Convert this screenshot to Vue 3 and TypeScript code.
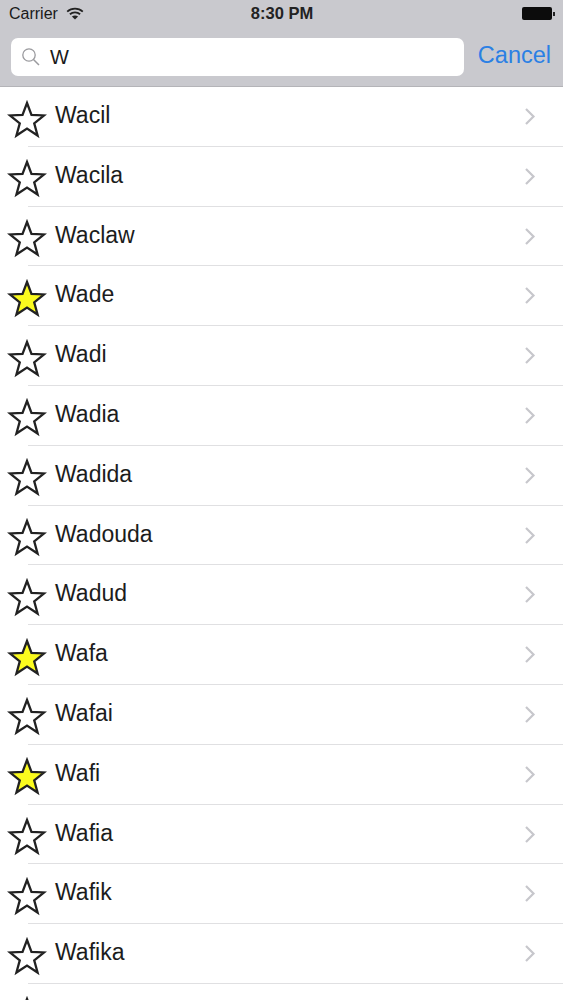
<script setup lang="ts">
interface Row { id: number; name: string; fav: boolean }
const rows: Row[] = [
  ['Wacil', false], ['Wacila', false], ['Waclaw', false], ['Wade', true], ['Wadi', false],
  ['Wadia', false], ['Wadida', false], ['Wadouda', false], ['Wadud', false], ['Wafa', true],
  ['Wafai', false], ['Wafi', true], ['Wafia', false], ['Wafik', false], ['Wafika', false], ['', false],
].map(([name, fav], id) => ({ id, name: name as string, fav: fav as boolean }))
</script>

<template>
  <div class="screen">
    <header class="top">
      <div class="status">
        <div class="status-left">
          <span>Carrier</span>
          <svg class="wifi" width="18" height="13" viewBox="0 0 18 13">
            <path d="M1.2 4.6C5.6.6 12.4.6 16.800 4.600" fill="none" stroke="#222" stroke-width="1.800" />
            <path d="M3.900 7.300C6.800 4.800 11.200 4.800 14.100 7.300" fill="none" stroke="#222" stroke-width="1.800" />
            <path d="M9 12.600 5.900 9.500C7.700 8 10.300 8 12.100 9.500Z" fill="#222" />
          </svg>
        </div>
        <div class="time">8:30 PM</div>
        <div class="status-right">
          <span class="battery"></span>
          <span class="nub"></span>
        </div>
      </div>
      <div class="searchbar">
        <div class="field">
          <svg class="glass" width="20" height="20" viewBox="0 0 20 20">
            <circle cx="8" cy="8" r="6.200" fill="none" stroke="#9a9a9e" stroke-width="1.300" />
            <path d="M12.500 12.500 18 18" stroke="#9a9a9e" stroke-width="1.500" fill="none" />
          </svg>
          <span class="query">W</span>
        </div>
        <span class="cancel">Cancel</span>
      </div>
    </header>
    <ul class="list">
      <li v-for="r in rows" :key="r.id" class="row">
        <svg class="star" width="40" height="42" viewBox="0 0 40 42">
          <polygon
            points="20,4 24.470,15.850 37.120,16.440 27.230,24.350 30.580,36.560 20,29.600 9.420,36.560 12.770,24.350 2.880,16.440 15.530,15.850"
            :fill="r.fav ? '#fbfb1e' : '#fff'"
            stroke="#222"
            stroke-width="2.300"
          />
        </svg>
        <span class="name">{{ r.name }}</span>
        <svg class="chev" width="12" height="19" viewBox="0 0 12 19">
          <path d="M2 2 9.500 9.500 2 17" fill="none" stroke="#c7c7cc" stroke-width="2.200" />
        </svg>
      </li>
    </ul>
  </div>
</template>

<style>
html, body { margin: 0; background: #fff; }
</style>

<style scoped>
.screen {
  width: 563px;
  height: 1000px;
  overflow: hidden;
  background: #fff;
  font-family: "Liberation Sans", Arial, sans-serif;
  color: #1a1a1a;
}
.top {
  height: 87px;
  box-sizing: border-box;
  background: #c9c9ce;
  border-bottom: 1px solid #b4b4b8;
}
.status {
  height: 30px;
  display: grid;
  grid-template-columns: 1fr auto 1fr;
  align-items: center;
  padding: 0 8px 3px 9px;
  box-sizing: border-box;
  font-size: 16px;
}
.status-left { display: flex; align-items: center; gap: 8px; }
.wifi { margin-top: -1px; }
.time { font-weight: 700; font-size: 16.500px; color: #222; }
.status-right { display: flex; justify-content: flex-end; align-items: center; }
.battery { width: 30px; height: 13px; border-radius: 2px; background: #0c0c0c; }
.nub { width: 2px; height: 4px; background: #222; margin-left: 1px; }
.searchbar {
  display: flex;
  align-items: center;
  padding: 8px 12px 0 11px;
  justify-content: space-between;
}
.field {
  width: 453px;
  height: 38px;
  box-sizing: border-box;
  background: #fff;
  border-radius: 7px;
  display: flex;
  align-items: center;
  padding-left: 10px;
  gap: 9px;
}
.glass { flex: none; }
.query { font-size: 20px; }
.cancel { font-size: 23.500px; color: #2b80e4; margin-top: -4px; }
.list { list-style: none; margin: 0; padding: 0; }
.row {
  position: relative;
  height: 59.800px;
  display: flex;
  align-items: flex-start;
  box-sizing: border-box;
}
.row::after {
  content: "";
  position: absolute;
  left: 28px;
  right: 0;
  bottom: 0;
  height: 1px;
  background: #e0e0e2;
}
.star { flex: none; margin: 11.500px 0 0 7px; }
.name {
  flex: 1;
  margin: 12px 0 0 8px;
  font-size: 23px;
  line-height: 32px;
  color: #1c1c1c;
}
.chev { flex: none; margin: 20px 27px 0 0; }
</style>
